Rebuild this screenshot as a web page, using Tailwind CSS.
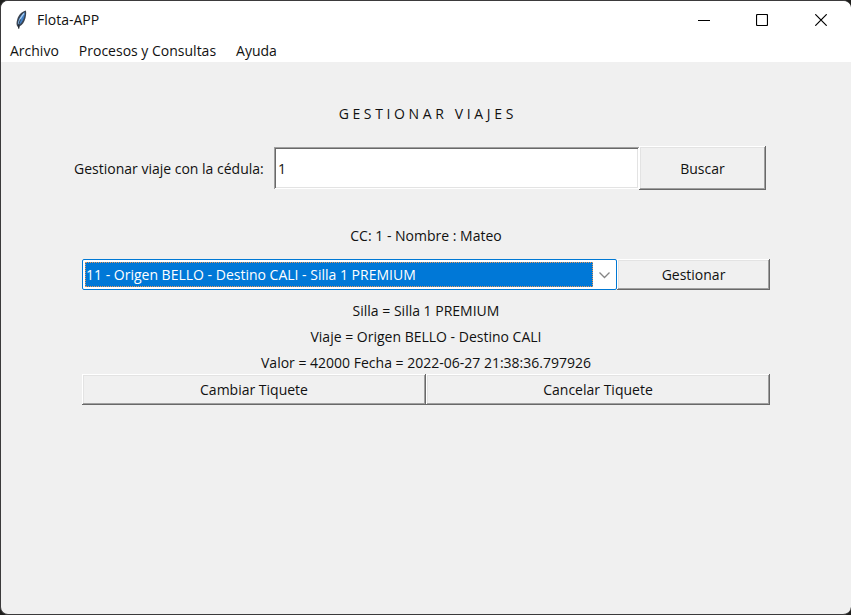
<!DOCTYPE html>
<html lang="es">
<head>
<meta charset="utf-8">
<title>Flota-APP</title>
<script src="https://cdn.jsdelivr.net/npm/@tailwindcss/browser@4"></script>
</head>
<body class="min-h-screen bg-[#1e1e1c]">
<div class="flex min-h-screen flex-col overflow-hidden rounded-lg border-y border-l border-[#3b3a3b] bg-[#f0f0f0] font-['Open_Sans','Noto_Sans',sans-serif] text-sm leading-5 text-[#111]">
  <header class="bg-white">
    <div class="flex h-[38px] items-center pl-3">
      <svg class="h-5 w-4" viewBox="0 0 16 20" aria-hidden="true">
        <path d="M12.800 .6C9 1.500 5.500 5 4.200 9.500C3.300 12.500 3.200 15 4.500 16.500L5.800 18.800L6.800 16.200C9.300 15 11.500 12 12.500 8C13.200 5 13.500 2.500 12.800 .6Z" fill="#3a4452"/>
        <path d="M12 2C8.500 4.500 5.500 8.500 4.800 13.500L6 15C9 13 11.700 8 12 2Z" fill="#3f7fc6"/>
        <path d="M11 3.500C8.200 6.500 6.300 10 5.600 14" fill="none" stroke="#a9cdf0" stroke-width="1.200"/>
        <path d="M7.500 9.500C6.300 12 5.500 15 5.800 18.800" fill="none" stroke="#15191e" stroke-width=".8"/>
      </svg>
      <h1 class="ml-2 flex-1">Flota-APP</h1>
      <button type="button" aria-label="Minimizar" class="grid h-full w-[58px] place-items-center"><svg class="size-3" viewBox="0 0 12 12"><path d="M0 6.500H12" stroke="#000"/></svg></button>
      <button type="button" aria-label="Maximizar" class="grid h-full w-[58px] place-items-center"><svg class="size-3" viewBox="0 0 12 12"><rect x=".5" y=".5" width="11" height="11" rx="1" fill="none" stroke="#000" stroke-width="1.200"/></svg></button>
      <button type="button" aria-label="Cerrar" class="grid h-full w-[60px] place-items-center"><svg class="size-3" viewBox="0 0 12 12"><path d="M.3 .3L11.700 11.700M11.700 .3L.3 11.700" stroke="#000" stroke-width="1.200"/></svg></button>
    </div>
    <nav class="flex items-center gap-5 pt-[2px] pb-px pl-[9px]">
      <button type="button">Archivo</button>
      <button type="button">Procesos y Consultas</button>
      <button type="button">Ayuda</button>
    </nav>
  </header>
  <main class="flex flex-1 flex-col pt-[42px]">
    <h2 class="text-center whitespace-pre">G E S T I O N A R   V I A J E S</h2>
    <form class="mt-[22px] flex h-11 items-center pr-[85px] pl-[73px]">
      <label for="cedula" class="w-[200px] pt-px">Gestionar viaje con la cédula:</label>
      <input id="cedula" type="text" value="1" class="h-[42px] min-w-0 flex-1 bg-white px-1 outline-none shadow-[inset_1px_1px_#a0a0a0,inset_-1px_-1px_#fff,inset_2px_2px_#696969,inset_-2px_-2px_#e3e3e3]">
      <button type="button" class="h-11 w-[127px] pt-px shadow-[inset_-1px_-1px_#696969,inset_1px_1px_#fff,inset_-2px_-2px_#a0a0a0,inset_2px_2px_#e3e3e3]">Buscar</button>
    </form>
    <p class="mt-9 text-center">CC: 1 - Nombre : Mateo</p>
    <section class="mt-[13px] pr-[81px] pl-[81px]">
      <div class="flex h-[31px]">
        <div class="flex min-w-0 flex-1 items-center rounded-xs border border-[#0078d4] bg-white p-0.5">
          <select aria-label="Tiquete" class="h-full min-w-0 flex-1 appearance-none border border-dotted border-[#e89a5a] bg-[#0078d7] text-white outline-none"><option>11 - Origen BELLO - Destino CALI - Silla 1 PREMIUM</option></select>
          <svg class="mr-1 ml-[6px] h-2 w-[11px]" viewBox="0 0 11 8" aria-hidden="true"><path d="M.5 1.500L5.500 6.500L10.500 1.500" fill="none" stroke="#858585" stroke-width="1.300"/></svg>
        </div>
        <button type="button" class="w-[153px] shadow-[inset_-1px_-1px_#696969,inset_1px_1px_#fff,inset_-2px_-2px_#a0a0a0,inset_2px_2px_#e3e3e3]">Gestionar</button>
      </div>
      <div class="mt-[11px] flex flex-col gap-[6px] text-center">
        <p>Silla = Silla 1 PREMIUM</p>
        <p>Viaje = Origen BELLO - Destino CALI</p>
        <p>Valor = 42000 Fecha = 2022-06-27 21:38:36.797926</p>
      </div>
      <div class="mt-px grid h-[31px] grid-cols-2">
        <button type="button" class="shadow-[inset_-1px_-1px_#696969,inset_1px_1px_#fff,inset_-2px_-2px_#a0a0a0,inset_2px_2px_#e3e3e3]">Cambiar Tiquete</button>
        <button type="button" class="shadow-[inset_-1px_-1px_#696969,inset_1px_1px_#fff,inset_-2px_-2px_#a0a0a0,inset_2px_2px_#e3e3e3]">Cancelar Tiquete</button>
      </div>
    </section>
  </main>
</div>
</body>
</html>
